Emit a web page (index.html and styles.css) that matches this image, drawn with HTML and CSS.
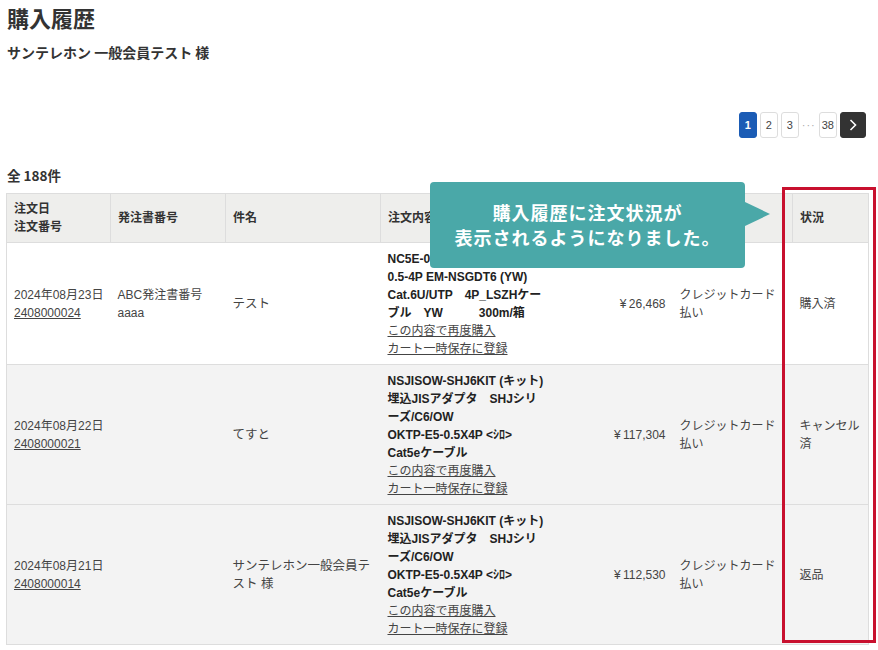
FILE: index.html
```html
<!DOCTYPE html>
<html lang="ja">
<head>
    <meta charset="UTF-8">
    <meta name="viewport" content="width=device-width, initial-scale=1.0">
    <title>購入履歴</title>
    <link rel="stylesheet" href="styles.css">
</head>
<body>
    <div class="page">
        <h1 class="title">購入履歴</h1>
        <p class="member">サンテレホン 一般会員テスト 様</p>

        <div class="pager">
            <a class="pg active">1</a>
            <a class="pg">2</a>
            <a class="pg">3</a>
            <span class="dots">···</span>
            <a class="pg">38</a>
            <a class="pg next">
                <svg width="8" height="12" viewBox="0 0 8 12"><path d="M1.5 1l5 5-5 5" fill="none" stroke="#fff" stroke-width="1.6"/></svg>
            </a>
        </div>

        <p class="count">全 188件</p>

        <div class="history">
            <table class="orders">
                <colgroup>
                    <col style="width:104px">
                    <col style="width:115px">
                    <col style="width:155px">
                    <col style="width:175px">
                    <col style="width:117px">
                    <col style="width:120px">
                    <col style="width:76px">
                </colgroup>
                <thead>
                    <tr>
                        <th>注文日<br>注文番号</th>
                        <th>発注書番号</th>
                        <th>件名</th>
                        <th>注文内容</th>
                        <th class="num">金額</th>
                        <th>お支払方法</th>
                        <th>状況</th>
                    </tr>
                </thead>
                <tbody>
                    <tr>
                        <td>2024年08月23日<br><a class="link">2408000024</a></td>
                        <td>ABC発注書番号<br>aaaa</td>
                        <td class="subject">テスト</td>
                        <td>
                            <div class="item">NC5E-0.5-4P-EM-NSGDT6<br>0.5-4P EM-NSGDT6 (YW)<br>Cat.6U/UTP　4P_LSZHケー<br>ブル　YW　　　300m/箱</div>
                            <a class="link">この内容で再度購入</a><br>
                            <a class="link">カート一時保存に登録</a>
                        </td>
                        <td class="num">¥&#8201;26,468</td>
                        <td>クレジットカード払い</td>
                        <td>購入済</td>
                    </tr>
                    <tr class="gray">
                        <td>2024年08月22日<br><a class="link">2408000021</a></td>
                        <td></td>
                        <td class="subject">てすと</td>
                        <td>
                            <div class="item">NSJISOW-SHJ6KIT (キット)<br>埋込JISアダプタ　SHJシリ<br>ーズ/C6/OW<br>OKTP-E5-0.5X4P &lt;ｼﾛ&gt;<br>Cat5eケーブル</div>
                            <a class="link">この内容で再度購入</a><br>
                            <a class="link">カート一時保存に登録</a>
                        </td>
                        <td class="num">¥&#8201;117,304</td>
                        <td>クレジットカード払い</td>
                        <td>キャンセル済</td>
                    </tr>
                    <tr class="gray">
                        <td>2024年08月21日<br><a class="link">2408000014</a></td>
                        <td></td>
                        <td class="subject">サンテレホン一般会員テスト 様</td>
                        <td>
                            <div class="item">NSJISOW-SHJ6KIT (キット)<br>埋込JISアダプタ　SHJシリ<br>ーズ/C6/OW<br>OKTP-E5-0.5X4P &lt;ｼﾛ&gt;<br>Cat5eケーブル</div>
                            <a class="link">この内容で再度購入</a><br>
                            <a class="link">カート一時保存に登録</a>
                        </td>
                        <td class="num">¥&#8201;112,530</td>
                        <td>クレジットカード払い</td>
                        <td>返品</td>
                    </tr>
                </tbody>
            </table>

            <!-- 注記 -->
            <div class="callout">購入履歴に注文状況が<br>表示されるようになりました。</div>
            <div class="highlight"></div>
        </div>
    </div>
</body>
</html>
```

FILE: styles.css
```css
body {
    margin: 0;
    font-family: 'Liberation Sans', 'Noto Sans CJK JP', sans-serif;
    color: #333;
    background: #fff;
}
.page {
    padding: 0 10px 0 6px;
}
.title {
    margin: 0;
    padding: 2px 0 0 1px;
    font-family: 'Noto Sans CJK JP', sans-serif;
    font-size: 22px;
    line-height: 30px;
    font-weight: bold;
}
.member {
    margin: 10px 0 0 1px;
    font-family: 'Noto Sans CJK JP', sans-serif;
    font-size: 14px;
    line-height: 20px;
    font-weight: bold;
}
.pager {
    display: flex;
    justify-content: flex-end;
    align-items: center;
    gap: 3px;
    margin: 50px 2px 0 0;
}
.pg {
    box-sizing: border-box;
    min-width: 18px;
    height: 26px;
    padding: 0 2px;
    border: 1px solid #ddd;
    border-radius: 3px;
    background: #fff;
    color: #444;
    font-size: 11px;
    display: flex;
    align-items: center;
    justify-content: center;
}
.pg.active {
    background: #1b5cb5;
    border-color: #1b5cb5;
    color: #fff;
    font-weight: bold;
}
.pg.next {
    width: 26px;
    background: #333;
    border-color: #333;
}
.dots {
    color: #aaa;
    font-size: 11px;
    letter-spacing: 1px;
}
.count {
    margin: 27px 0 0 1px;
    font-family: 'Noto Sans CJK JP', sans-serif;
    font-size: 13.5px;
    line-height: 20px;
    font-weight: bold;
}
.history {
    position: relative;
    margin-top: 8px;
}
.orders {
    width: 100%;
    border-collapse: collapse;
    table-layout: fixed;
    font-size: 12px;
}
.orders th {
    background: #eeeeec;
    border: 1px solid #ddd;
    padding: 6px 7px;
    line-height: 18px;
    text-align: left;
    font-weight: bold;
    color: #333;
    vertical-align: middle;
}
.orders td {
    border-top: 1px solid #ddd;
    border-bottom: 1px solid #ddd;
    padding: 7px 7px 6px;
    line-height: 18px;
    color: #444;
    vertical-align: middle;
}
.orders td:first-child {
    border-left: 1px solid #ddd;
}
.orders td:last-child {
    border-right: 1px solid #ddd;
}
.orders .gray td {
    background: #f3f3f3;
}
.orders .num {
    text-align: right;
}
.orders .subject {
    font-size: 12.5px;
}
.item {
    font-weight: bold;
    color: #222;
}
.link {
    color: #444;
    text-decoration: underline;
}
.callout {
    position: absolute;
    left: 424px;
    top: -11px;
    width: 315px;
    height: 86px;
    box-sizing: border-box;
    display: flex;
    align-items: center;
    justify-content: center;
    background: #4aa8a8;
    border-radius: 4px;
    color: #fff;
    font-family: 'Noto Sans CJK JP', sans-serif;
    font-size: 18px;
    font-weight: bold;
    letter-spacing: 1px;
    line-height: 25px;
    text-align: center;
}
.callout::after {
    content: '';
    position: absolute;
    left: 100%;
    top: 20px;
    border-left: 25px solid #4aa8a8;
    border-top: 12px solid transparent;
    border-bottom: 12px solid transparent;
}
.highlight {
    position: absolute;
    left: 776px;
    top: -6px;
    width: 94px;
    height: 456px;
    box-sizing: border-box;
    border: 3px solid #c8102e;
}
```
